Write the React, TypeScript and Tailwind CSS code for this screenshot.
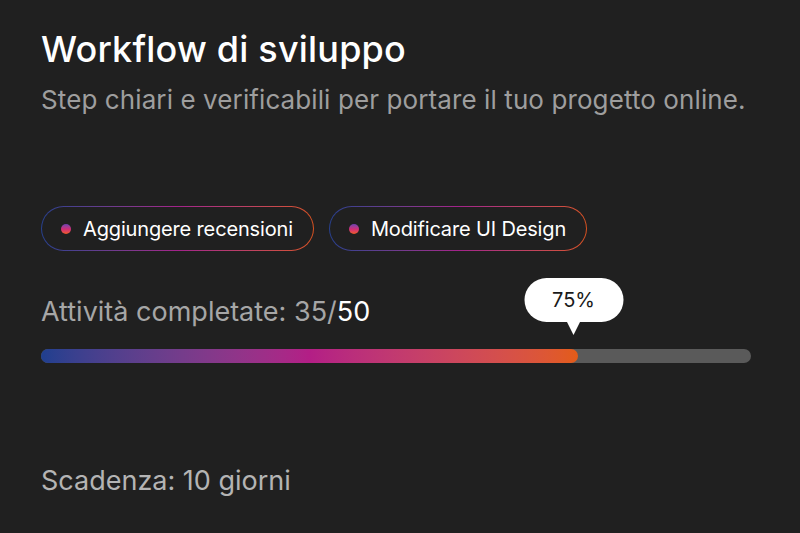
import React from 'react';

const tasks = ['Aggiungere recensioni', 'Modificare UI Design'];

function TaskChip({ label }: { label: string }) {
  return (
    <div className="rounded-full p-px bg-gradient-to-r from-[#26408f] via-[#a3228a] to-[#d8521f]">
      <div className="flex items-center gap-[12px] rounded-full bg-[#202020] h-[43px] pl-[19px] pr-[20px]">
        <span className="w-[10px] h-[10px] rounded-full bg-gradient-to-b from-[#6a3cb0] via-[#d02878] to-[#ef5a12]" />
        <span className="text-[20px] text-white tracking-[-0.15px]">{label}</span>
      </div>
    </div>
  );
}

export default function App() {
  const done = 35;
  const total = 50;
  const pct = 75;

  return (
    <div
      className="w-[800px] h-[533px] bg-[#202020] overflow-hidden pl-[41px] pr-[49px] pt-[25px]"
      style={{ fontFamily: 'Inter, "Noto Sans", sans-serif' }}
    >
      {/* Header */}
      <h1 className="text-[36px] leading-[48px] font-medium text-white tracking-[0.2px]">
        Workflow di sviluppo
      </h1>
      <p className="mt-[11px] text-[26px] leading-[32px] text-[#9e9e9e] tracking-[0.1px]">
        Step chiari e verificabili per portare il tuo progetto online.
      </p>

      {/* Tasks */}
      <div className="flex gap-[15px] mt-[90px]">
        {tasks.map((t) => (
          <TaskChip key={t} label={t} />
        ))}
      </div>

      {/* Progress */}
      <div className="mt-[45px] text-[27px] leading-[32px] text-[#a6a6a6]">
        Attività completate: {done}/<span className="text-white">{total}</span>
      </div>

      <div className="relative mt-[21px] h-[14px] w-full rounded-full bg-[#5a5a5a]">
        <div
          className="h-full rounded-full bg-gradient-to-r from-[#1f3f8f] via-[#b31e86] to-[#e35c17]"
          style={{ width: `${pct + 0.6}%` }}
        />
        <div
          className="absolute bottom-[28px] -translate-x-1/2 flex flex-col items-center"
          style={{ left: `${pct}%` }}
        >
          <div className="bg-white rounded-[22px] w-[99px] h-[44px] flex items-center justify-center text-[20px] text-[#1a1a1a]">
            {pct}%
          </div>
          <div className="w-0 h-0 border-l-[7px] border-r-[7px] border-t-[14px] border-l-transparent border-r-transparent border-t-white -mt-px" />
        </div>
      </div>

      {/* Deadline */}
      <div className="mt-[102px] text-[27px] leading-[32px] text-[#b4b4b4]">
        Scadenza: 10 giorni
      </div>
    </div>
  );
}
